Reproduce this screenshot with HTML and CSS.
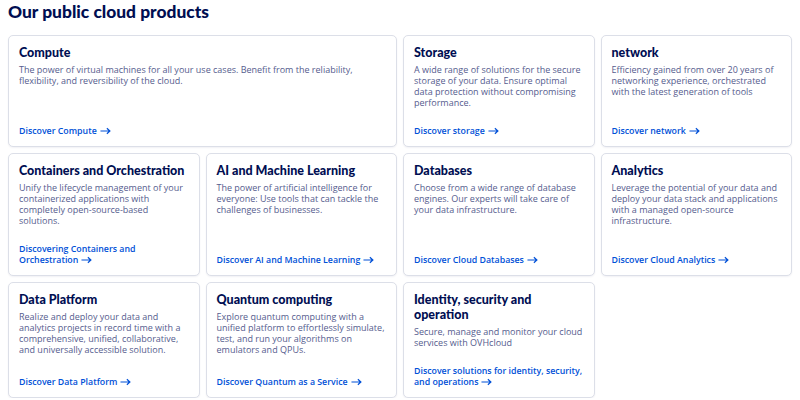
FILE: index.html
```html
<!DOCTYPE html>
<html lang="en">
<head>
<meta charset="utf-8">
<title>Our public cloud products</title>
<link rel="stylesheet" href="styles.css">
</head>
<body>
<section class="products">
  <h2 class="products__title">Our public cloud products</h2>
  <div class="grid">
    <article class="card card--wide">
      <h3 class="card__title">Compute</h3>
      <p class="card__text">The power of virtual machines for all your use cases. Benefit from the reliability, flexibility, and reversibility of the cloud.</p>
      <a class="card__link" href="#">Discover Compute<svg class="arrow" viewBox="0 0 12 8"><path d="M0.5 4H10.5M7.5 1L10.8 4L7.5 7"/></svg></a>
    </article>
    <article class="card">
      <h3 class="card__title">Storage</h3>
      <p class="card__text">A wide range of solutions for the secure storage of your data. Ensure optimal data protection without compromising performance.</p>
      <a class="card__link" href="#">Discover storage<svg class="arrow" viewBox="0 0 12 8"><path d="M0.5 4H10.5M7.5 1L10.8 4L7.5 7"/></svg></a>
    </article>
    <article class="card">
      <h3 class="card__title">network</h3>
      <p class="card__text">Efficiency gained from over 20 years of networking experience, orchestrated with the latest generation of tools</p>
      <a class="card__link" href="#">Discover network<svg class="arrow" viewBox="0 0 12 8"><path d="M0.5 4H10.5M7.5 1L10.8 4L7.5 7"/></svg></a>
    </article>
    <article class="card">
      <h3 class="card__title">Containers and Orchestration</h3>
      <p class="card__text">Unify the lifecycle management of your containerized applications with completely open-source-based solutions.</p>
      <a class="card__link" href="#">Discovering Containers and Orchestration<svg class="arrow" viewBox="0 0 12 8"><path d="M0.5 4H10.5M7.5 1L10.8 4L7.5 7"/></svg></a>
    </article>
    <article class="card">
      <h3 class="card__title">AI and Machine Learning</h3>
      <p class="card__text">The power of artificial intelligence for everyone: Use tools that can tackle the challenges of businesses.</p>
      <a class="card__link" href="#">Discover AI and Machine Learning<svg class="arrow" viewBox="0 0 12 8"><path d="M0.5 4H10.5M7.5 1L10.8 4L7.5 7"/></svg></a>
    </article>
    <article class="card">
      <h3 class="card__title">Databases</h3>
      <p class="card__text">Choose from a wide range of database engines. Our experts will take care of your data infrastructure.</p>
      <a class="card__link" href="#">Discover Cloud Databases<svg class="arrow" viewBox="0 0 12 8"><path d="M0.5 4H10.5M7.5 1L10.8 4L7.5 7"/></svg></a>
    </article>
    <article class="card">
      <h3 class="card__title">Analytics</h3>
      <p class="card__text">Leverage the potential of your data and deploy your data stack and applications with a managed open-source infrastructure.</p>
      <a class="card__link" href="#">Discover Cloud Analytics<svg class="arrow" viewBox="0 0 12 8"><path d="M0.5 4H10.5M7.5 1L10.8 4L7.5 7"/></svg></a>
    </article>
    <article class="card">
      <h3 class="card__title">Data Platform</h3>
      <p class="card__text">Realize and deploy your data and analytics projects in record time with a comprehensive, unified, collaborative, and universally accessible solution.</p>
      <a class="card__link" href="#">Discover Data Platform<svg class="arrow" viewBox="0 0 12 8"><path d="M0.5 4H10.5M7.5 1L10.8 4L7.5 7"/></svg></a>
    </article>
    <article class="card">
      <h3 class="card__title">Quantum computing</h3>
      <p class="card__text">Explore quantum computing with a unified platform to effortlessly simulate, test, and run your algorithms on emulators and QPUs.</p>
      <a class="card__link" href="#">Discover Quantum as a Service<svg class="arrow" viewBox="0 0 12 8"><path d="M0.5 4H10.5M7.5 1L10.8 4L7.5 7"/></svg></a>
    </article>
    <article class="card">
      <h3 class="card__title">Identity, security and operation</h3>
      <p class="card__text">Secure, manage and monitor your cloud services with OVHcloud</p>
      <a class="card__link" href="#">Discover solutions for identity, security, and operations<svg class="arrow" viewBox="0 0 12 8"><path d="M0.5 4H10.5M7.5 1L10.8 4L7.5 7"/></svg></a>
    </article>
  </div>
</section>
</body>
</html>
```

FILE: styles.css
```css
html, body {
  margin: 0;
  padding: 0;
  background: #ffffff;
}

body {
  font-family: "Open Sans", "Noto Sans", sans-serif;
  color: #4d5592;
}

.products {
  padding: 0 8px;
}

.products__title {
  margin: 0 0 11px;
  font-family: Lato, "Open Sans", sans-serif;
  font-size: 17.4px;
  line-height: 24px;
  font-weight: 900;
  color: #000e52;
}

.grid {
  display: grid;
  grid-template-columns: repeat(4, 1fr);
  gap: 6px;
}

.card {
  display: flex;
  flex-direction: column;
  padding: 9px 8px 9px 10px;
  border: 1px solid #dcdfe8;
  border-radius: 5px;
  box-shadow: 0 1px 2px rgba(0, 14, 82, 0.06);
  background: #fff;
}

.card--wide {
  grid-column: span 2;
}

.card__title {
  margin: 0 0 4px;
  font-family: Lato, "Open Sans", sans-serif;
  font-size: 12.5px;
  line-height: 15px;
  font-weight: 900;
  color: #000e52;
}

.card__text {
  margin: 0 0 18px;
  font-size: 9px;
  line-height: 11px;
  color: #555c8e;
}

.card__link {
  margin-top: auto;
  font-size: 8.8px;
  line-height: 11px;
  font-weight: 600;
  color: #0050d7;
  text-decoration: none;
}

.arrow {
  width: 11px;
  height: 8px;
  margin-left: 3px;
  vertical-align: -1px;
  fill: none;
  stroke: #0050d7;
  stroke-width: 1.3;
}
```
